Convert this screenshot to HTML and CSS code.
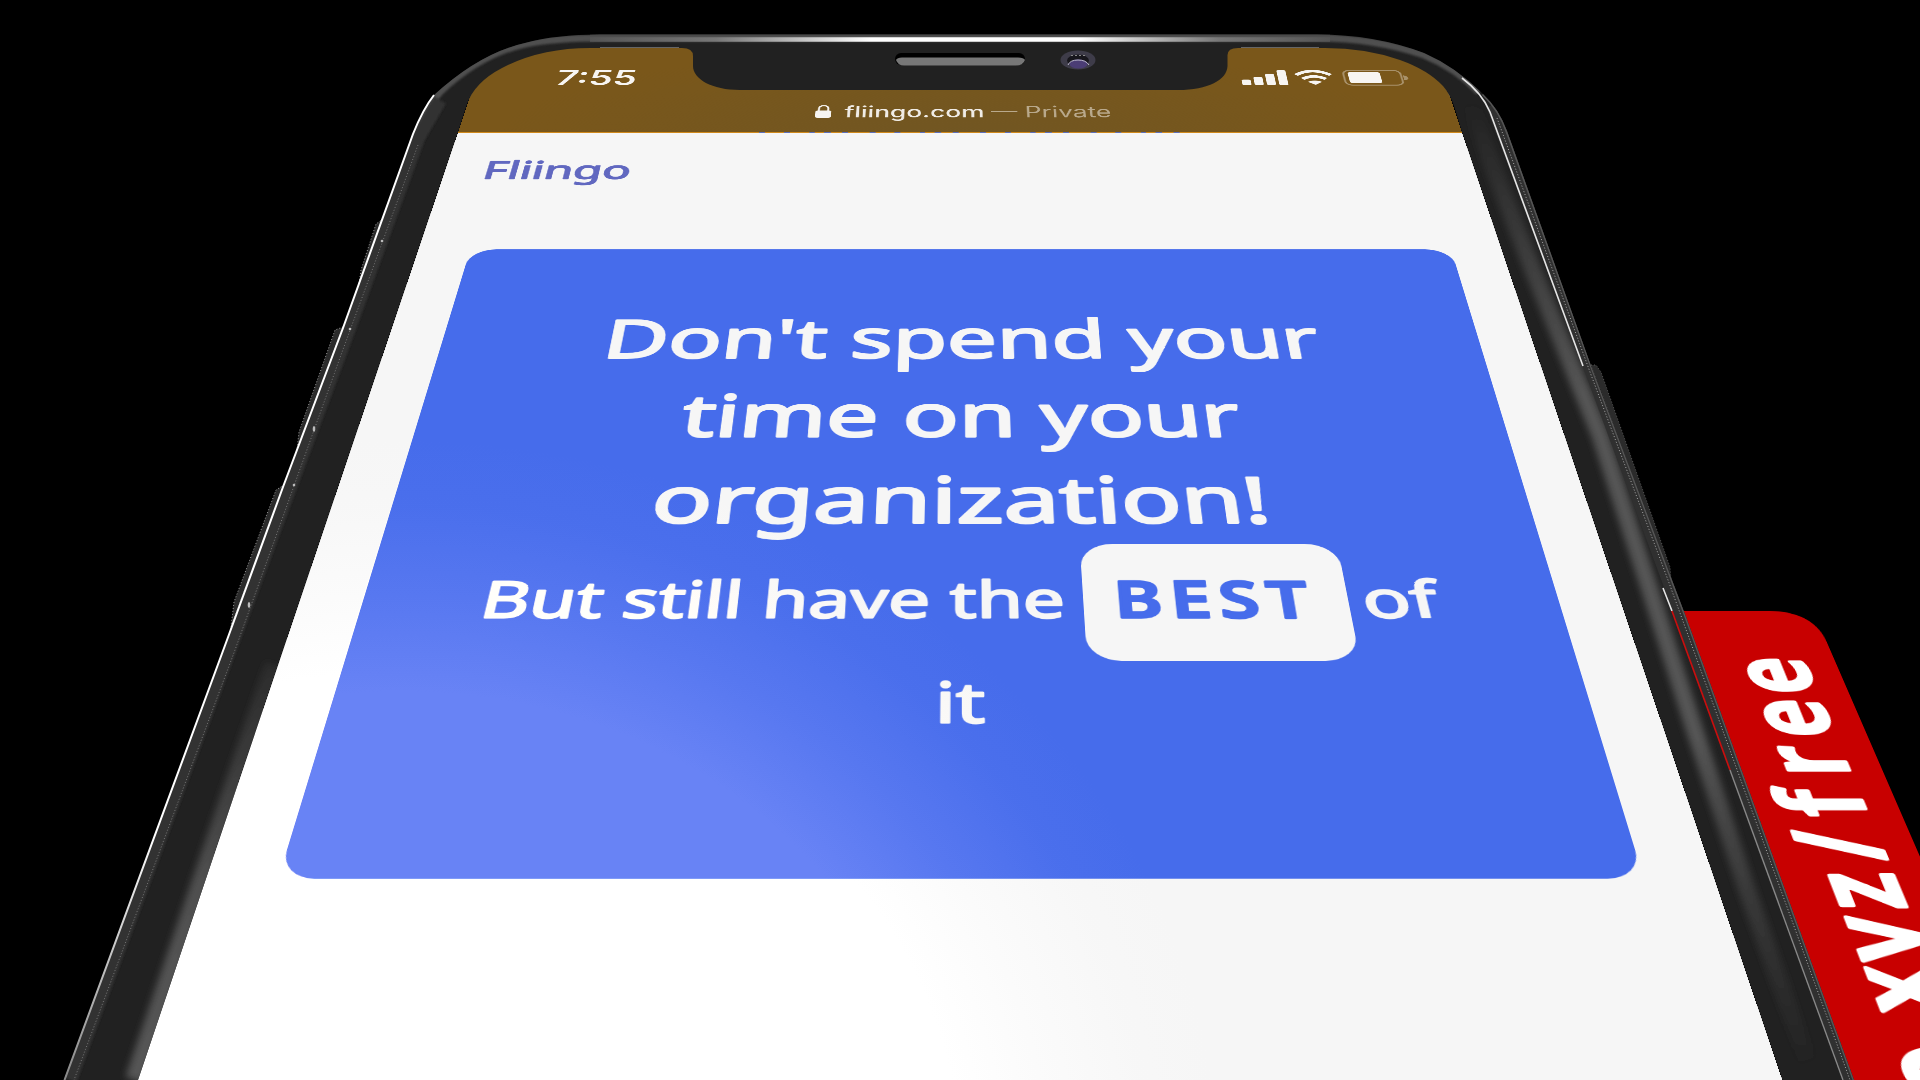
FILE: index.html
```html
<!DOCTYPE html>
<html lang="en">
<head>
<meta charset="utf-8">
<title>Fliingo</title>
<link rel="stylesheet" href="styles.css">
</head>
<body>
<main class="scene">
  <section class="plane board-plane">
    <svg class="board" width="1750" height="2100" viewBox="0 0 1750 2100">
      <path class="board-face" d="M1550 1275H1665Q1714 1277 1714 1325V2100H1550Z"/>
      <g transform="translate(1679 1816) rotate(-90) scale(.82 1)">
        <text class="board-text" x="2 74 149 224 293 360 426 503" y="0">xyz/free</text>
        <text class="board-text" x="-9" y="0" text-anchor="end">rotato.</text>
      </g>
    </svg>
  </section>

  <section class="plane screen">
    <header class="system-bar">
      <div class="status-row">
        <svg class="fit" width="119" height="46"><text class="time" x="-3" y="45" textLength="125" lengthAdjust="spacingAndGlyphs">7:55</text></svg>
        <svg class="fit" width="260" height="46" viewBox="0 0 260 46">
          <g fill="#f7f5f2">
            <rect x="0" y="29" width="14" height="17" rx="4"/><rect x="19" y="21" width="14" height="25" rx="4"/>
            <rect x="38" y="11" width="14" height="35" rx="4"/><rect x="57" y="0" width="14" height="46" rx="4"/>
            <path d="M113 45l-11-9q11-8 22 0z"/>
            <rect x="167" y="6" width="50" height="34" rx="5"/>
          </g>
          <g fill="none" stroke="#f7f5f2" stroke-width="7.500">
            <path d="M86 15Q113-9 140 15"/><path d="M95 27Q113 12 131 27"/>
          </g>
          <rect x="160" y="1" width="89" height="45" rx="11" fill="none" stroke="#a8916a" stroke-width="3"/>
          <path d="M252 16q7 2 7 8t-7 7z" fill="#a8916a"/>
        </svg>
      </div>
      <div class="url-row">
        <svg class="fit" width="24" height="38" viewBox="0 0 24 38"><rect y="17" width="24" height="21" rx="4" fill="#f7f5f2"/><path d="M5 18V11Q5 3 12 3t7 8v7" fill="none" stroke="#f7f5f2" stroke-width="3"/></svg>
        <svg class="fit" width="208" height="38"><text class="url" x="-2" y="37" textLength="212" lengthAdjust="spacingAndGlyphs">fliingo.com</text></svg>
        <svg class="fit" width="178" height="38"><text class="url dim" x="-2" y="37" textLength="182" lengthAdjust="spacingAndGlyphs">— Private</text></svg>
      </div>
      <svg class="bar-edge" width="1500" height="4"><rect width="1500" height="4" fill="#d18a1c"/><path d="M450 2H1085" stroke="#5f6fb8" stroke-width="4" stroke-dasharray="9 28 9 29 8 14 10 17 9 32"/></svg>
    </header>
    <header class="site-header">
      <svg class="fit" width="208" height="50"><text class="logo" x="-5" y="48" textLength="215" lengthAdjust="spacingAndGlyphs">Fliingo</text></svg>
    </header>
    <article class="card">
      <svg class="fit" width="935" height="160"><text class="headline" x="0" y="120" textLength="935" lengthAdjust="spacingAndGlyphs">Don't spend your</text></svg>
      <svg class="fit" width="698" height="160"><text class="headline" x="0" y="120" textLength="698" lengthAdjust="spacingAndGlyphs">time on your</text></svg>
      <svg class="fit" width="739" height="160"><text class="headline" x="0" y="120" textLength="738" lengthAdjust="spacingAndGlyphs">organization!</text></svg>
      <div class="tagline">
        <svg class="fit" width="656" height="160"><text class="sub" x="-6" y="120" textLength="662" lengthAdjust="spacingAndGlyphs">But still have the</text></svg>
        <span class="pill"><svg class="fit" width="217" height="191"><text class="best" x="-7" y="123" textLength="221">BEST</text></svg></span>
        <svg class="fit" width="79" height="160"><text class="sub" x="-4" y="120" textLength="85" lengthAdjust="spacingAndGlyphs">of</text></svg>
      </div>
      <svg class="fit" width="50" height="160"><text class="sub" x="-3" y="120" textLength="54" lengthAdjust="spacingAndGlyphs">it</text></svg>
    </article>
  </section>

  <div class="gloss page-gloss"></div>
  <div class="gloss card-gloss"></div>

  <svg class="frame" width="1920" height="1080" viewBox="0 0 1920 1080">
    <defs>
      <linearGradient id="rim" x1="590" x2="1330" y1="0" y2="0" gradientUnits="userSpaceOnUse">
        <stop offset="0" stop-color="#555"/><stop offset=".17" stop-color="#777"/><stop offset=".38" stop-color="#fff"/><stop offset=".66" stop-color="#fff"/><stop offset=".85" stop-color="#777"/><stop offset="1" stop-color="#555"/>
      </linearGradient>
      <linearGradient id="sheen" x1="0" x2="0" y1="100" y2="1080" gradientUnits="userSpaceOnUse">
        <stop offset="0" stop-color="#555" stop-opacity="0"/><stop offset=".3" stop-color="#555"/><stop offset=".65" stop-color="#555"/><stop offset="1" stop-color="#444" stop-opacity="0"/>
      </linearGradient>
      <linearGradient id="inner" x1="0" x2="0" y1="600" y2="1080" gradientUnits="userSpaceOnUse">
        <stop offset="0" stop-color="#505050" stop-opacity="0"/><stop offset=".6" stop-color="#505050"/><stop offset="1" stop-color="#555"/>
      </linearGradient>
      <linearGradient id="edge" x1="0" x2="0" y1="100" y2="1080" gradientUnits="userSpaceOnUse">
        <stop offset="0" stop-color="#fff"/><stop offset=".75" stop-color="#fff"/><stop offset="1" stop-color="#888"/>
      </linearGradient>
      <filter id="soft" x="-10%" y="-10%" width="120%" height="120%"><feGaussianBlur stdDeviation="3.5"/></filter>
      <filter id="fine" x="-10%" y="-200%" width="120%" height="500%"><feGaussianBlur stdDeviation="1"/></filter>
      <path id="body" d="M64 1080L227 640L283 487L343 328L413 134Q423 109 434 95Q480 53 525 43Q556 34.500 600 34.500H1317Q1375 34.500 1424 53Q1456 67 1483 94Q1499 109 1507 131L1590 363L1686 617L1854 1080H1782.500L1462 132L1454 106Q1450 94 1443 86Q1428 70 1400 60Q1366 48 1325 48H1238Q1227 48 1227.500 56V66C1227 80 1208 90 1178 90H740C712 90 693 79 693 66V56Q693 48 682 48H590Q540 48 502 68Q475 82 467 104L458 132L138 1080Z"/>
      <clipPath id="bodyClip"><use href="#body"/></clipPath>
    </defs>
    <g class="side-keys">
      <path d="M383 219L376 224L361 270L359 284Z"/><path d="M343 327L335 330L299 432L297 450Z"/><path d="M284 485L276 490L234 602L231 627Z"/>
      <path class="key-right" d="M1591 365L1596 365L1601 372L1670 567L1671 580Z"/>
    </g>
    <use href="#body" fill="#212121"/>
    <g clip-path="url(#bodyClip)">
      <path d="M413 138Q425 108 440 92Q480 54 525 44Q556 38 600 38H1317Q1375 38 1424 55Q1456 68 1479 92" fill="none" stroke="#505050" stroke-width="7" filter="url(#fine)"/>
      <path d="M590 39.500H1330" stroke="url(#rim)" stroke-width="4.500"/>
      <path d="M590 35H1330" stroke="#4c4c4c" stroke-width="1.500"/>
      <path d="M70 1080L233 640L349 328L418 138L440 100" fill="none" stroke="#303030" stroke-width="14" filter="url(#fine)"/>
      <path d="M134 1080L274 665" fill="none" stroke="url(#inner)" stroke-width="18" filter="url(#soft)"/>
      <path d="M1470 100L1493 167L1533 270L1600 435L1650 590L1693 725L1747 890L1807 1060" fill="none" stroke="url(#sheen)" stroke-width="17" filter="url(#soft)"/>
      <path d="M1492 105L1585 355L1679 611L1852 1085" fill="none" stroke="#303030" stroke-width="12"/>
      <path d="M1483 94Q1500 110 1508 134L1591 365L1686 617L1854 1080" fill="none" stroke="#555" stroke-width="3"/>
      <path d="M1497 118L1590 372L1668 580L1850 1080" fill="none" stroke="#aaa" stroke-width="1" stroke-dasharray="1 2"/>
      <path d="M418 145L341 355L235 650L74 1080" fill="none" stroke="#777" stroke-width="1" stroke-dasharray="1 2"/>
    </g>
    <path d="M64.500 1080L227 640L283 487L343 328L413 134Q423 109 434 95" fill="none" stroke="url(#edge)" stroke-width="2"/>
    <path d="M1462 78Q1482 93 1490 112L1583 366M1663 588L1672 611" fill="none" stroke="#e5e5e5" stroke-width="1.600"/>
    <path d="M1672 611L1730 770" stroke="#c80f0f" stroke-width="1.700"/>
    <path d="M1730 770L1843 1080" stroke="#888" stroke-width="1.400"/>
    <path d="M600 47.500H679M1241 47.500H1319" stroke="#666" stroke-width="1"/>
    <rect x="895" y="53" width="130" height="12" rx="6" fill="#000"/>
    <path d="M896 60Q897 57.500 902 57.500H1018Q1024 57.500 1025 60Q1023 65.500 1016 65.500H904Q898 65.500 896 60Z" fill="#777"/>
    <ellipse cx="1078" cy="60" rx="17.500" ry="9.500" fill="#3e3c49"/>
    <ellipse cx="1078" cy="60.500" rx="11" ry="6" fill="#17161c"/>
    <ellipse cx="1078.500" cy="64" rx="9" ry="4.500" fill="#4b3d75"/>
    <path d="M1068 65Q1070 60 1078 60T1089 65" fill="none" stroke="#bbb8cc" stroke-width="1"/>
    <path d="M1071 55.500H1087" stroke="#888" stroke-width="1" stroke-dasharray="2 2"/>
    <g fill="#bbb"><circle cx="382" cy="241" r="1.300"/><circle cx="350" cy="329" r="1.300"/><ellipse cx="314" cy="429" rx="1.300" ry="3"/><circle cx="294" cy="485" r="1.300"/><ellipse cx="249" cy="605" rx="1.300" ry="3"/></g>
  </svg>
</main>
</body>
</html>
```
FILE: styles.css
```css
* { box-sizing: border-box; }
body { margin: 0; background: #000; overflow: hidden; }
svg { display: block; flex: none; }

.scene {
  display: grid;
  width: 1920px;
  height: 1080px;
  overflow: hidden;
  background: #000;
}
.scene > * { grid-area: 1 / 1; }

/* Surfaces tilted away from the viewer, sharing one vanishing point */
.plane {
  transform-origin: 0 0;
  transform: matrix3d(0.6314, 0, 0, 0, -0.21578, 0.30412, 0, -0.00022477, 0, 0, 1, 0, 486.45, 48, 0, 1);
}
.board-plane { width: 1750px; height: 2100px; }
.board-face { fill: #c80000; }
.board-text {
  font: 600 116px "Noto Sans", sans-serif;
  fill: #fff;
  stroke: #fff;
  stroke-width: 5px;
  stroke-linejoin: round;
}

.screen {
  display: flex;
  flex-direction: column;
  width: 1500px;
  height: 1900px;
  overflow: hidden;
  border-radius: 150px 150px 0 0;
  background: #f6f6f6;
}
.fit { overflow: visible; }

.system-bar {
  display: flex;
  flex-direction: column;
  height: 255px;
  background: radial-gradient(ellipse 700px 260px at 50% 100%, #715622, #7a571a);
}
.status-row {
  display: flex;
  justify-content: space-between;
  padding: 69px 54px 0 127px;
}
.url-row {
  display: flex;
  gap: 14px;
  padding: 58px 0 0 531px;
}
.url-row > :first-child { margin-right: 8px; }
.bar-edge { margin-top: auto; }
.time { font: 600 62px Inter, sans-serif; fill: #f7f5f2; }
.url { font: 500 46px Inter, sans-serif; fill: #f0ece6; }
.url.dim { font-weight: 400; fill: #b9a98c; }

.site-header { height: 304px; padding: 77px 0 0 61px; }
.logo {
  font: 400 66px "Noto Sans", sans-serif;
  fill: #6168c0;
  stroke: #6168c0;
  stroke-width: 2.5px;
  stroke-linejoin: round;
}

.card {
  display: flex;
  flex-direction: column;
  align-items: center;
  height: 1097px;
  margin: 0 70px 0 72px;
  padding-top: 127px;
  border-radius: 36px;
  background: #466ceb;
}
.headline, .sub {
  font: 400 116px "Noto Sans", sans-serif;
  fill: #f6f6f6;
  stroke: #f6f6f6;
  stroke-width: 4px;
  stroke-linejoin: round;
}
.sub { font-size: 83px; stroke-width: 3px; }
.tagline { display: flex; height: 160px; }
.pill {
  display: flex;
  justify-content: center;
  width: 301px;
  height: 191px;
  margin: -3px 20px 0 21px;
  border-radius: 38px;
  background: #f6f6f6;
}
.best {
  font: 600 83px "Noto Sans", sans-serif;
  fill: #466ceb;
  stroke: #466ceb;
  stroke-width: 3.5px;
  stroke-linejoin: round;
}

.gloss { mix-blend-mode: plus-lighter; }
.page-gloss {
  clip-path: polygon(458px 132px, 1462px 132px, 1783px 1080px, 138px 1080px);
  background: radial-gradient(ellipse 820px 740px at 400px 1180px, rgb(10, 10, 10) 0 66%, rgba(10, 10, 10, 0.5) 79%, rgba(10, 10, 10, 0.12) 91%, rgba(10, 10, 10, 0) 100%);
}
.card-gloss {
  clip-path: polygon(470px 249px, 1452px 249px, 1639px 878px, 277px 878px);
  background: radial-gradient(ellipse 820px 740px at 400px 1180px, rgb(24, 13, 0) 0 66%, rgba(24, 13, 0, 0.5) 79%, rgba(24, 13, 0, 0.12) 91%, rgba(24, 13, 0, 0) 100%);
}
.frame { position: relative; }
.side-keys { fill: #2b2b2b; stroke: #999; stroke-width: 1; stroke-dasharray: 1 2; }
.key-right { stroke: #555; }
```
